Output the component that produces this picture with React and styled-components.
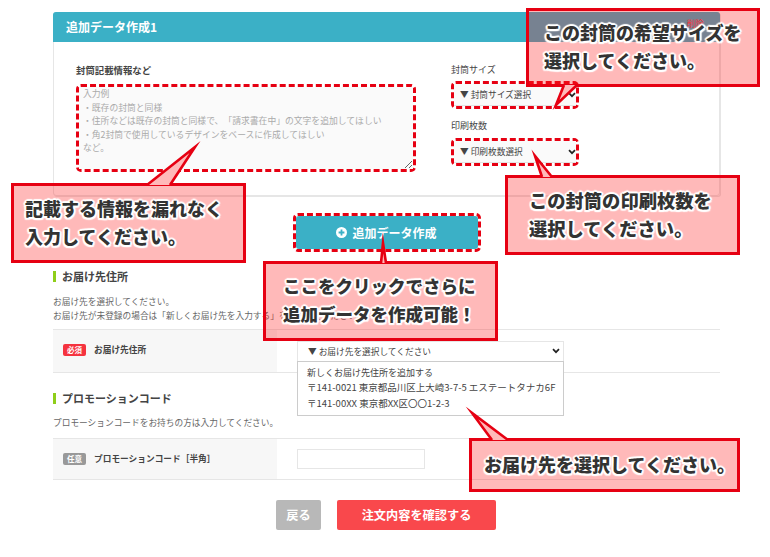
import React from "react";
import styled, { createGlobalStyle } from "styled-components";
//
const chevron =
  "url(\"data:image/svg+xml,%3Csvg xmlns='http://www.w3.org/2000/svg' width='8' height='6' viewBox='0 0 8 6'%3E%3Cpath d='M1 1.2l3 3 3-3' fill='none' stroke='%23222' stroke-width='1.7'/%3E%3C/svg%3E\")";
//
const GlobalStyle = createGlobalStyle`
  html, body {
    margin: 0;
    padding: 0;
    background: #fff;
  }
  body {
    font-family: "Noto Sans CJK JP", "Noto Sans", sans-serif;
    color: #555;
    overflow: hidden;
    text-spacing-trim: space-all;
  }
  textarea::placeholder {
    text-spacing-trim: space-all;
  }
`;
//
const Page = styled.div`
  position: relative;
  box-sizing: border-box;
  width: 770px;
  height: 557px;
  padding: 12px 50px 0 53px;
  background: #fff;
  overflow: hidden;
`;
const Panel = styled.section`
  box-sizing: border-box;
  height: 184px;
  border: 1px solid #e6e6e6;
  border-radius: 3px;
  box-shadow: 1px 1px 0 #e6e6e6;
`;
const PanelHeader = styled.h2`
  box-sizing: border-box;
  display: flex;
  justify-content: space-between;
  height: 30px;
  margin: -1px -1px 0;
  padding: 0 16px 0 13px;
  background: #3bb0c6;
  border-radius: 3px 3px 0 0;
  color: #fff;
  font-size: 12px;
  font-weight: 700;
  line-height: 30px;
`;
const RemoveLink = styled.span`
  color: #e8434f;
  font-size: 8.7px;
  font-weight: 400;
  line-height: 24px;
`;
const PanelBody = styled.div`
  display: grid;
  grid-template-columns: 340px 128px;
  column-gap: 35px;
  padding: 21px 0 0 22px;
`;
const FieldLabel = styled.div`
  margin-top: ${p => p.$top || 0}px;
  margin-bottom: ${p => p.$gap || 4}px;
  color: #444;
  font-size: ${p => (p.$bold ? 9.4 : 9)}px;
  font-weight: ${p => (p.$bold ? 700 : 400)};
  line-height: 14px;
`;
const Marked = styled.div`
  box-sizing: border-box;
  display: flex;
  height: ${p => p.$h}px;
  border: 3px dashed #e60012;
  border-radius: 5px;
`;
const Note = styled.textarea`
  box-sizing: border-box;
  flex: 1;
  padding: 0 4px;
  border: 0;
  background: #fafafa;
  font-family: inherit;
  font-size: 8.8px;
  line-height: 13.6px;
  &::placeholder {
    color: #aaa;
    opacity: 1;
  }
`;
const PanelSelect = styled.select`
  flex: 1;
  min-width: 0;
  padding-left: 6px;
  border: 0;
  border-bottom: 1px solid #e3e3e3;
  background: #fafafa ${chevron} no-repeat right 0 center;
  appearance: none;
  color: #444;
  font-family: inherit;
  font-size: 8.7px;
`;
const AddButtonWrap = styled(Marked)`
  width: 188px;
  margin: 17px auto 0;
`;
const AddButton = styled.button`
  flex: 1;
  display: flex;
  align-items: center;
  justify-content: center;
  gap: 5px;
  padding: 0;
  border: 0;
  border-radius: 3px;
  background: #3bb0c6;
  color: #fff;
  font-family: inherit;
  font-size: 12px;
  font-weight: 700;
`;
const Heading = styled.h3`
  margin: ${p => p.$top}px 0 0;
  padding-left: 6px;
  border-left: 3px solid #8fce1a;
  color: #444;
  font-size: 11px;
  font-weight: 700;
  line-height: 11px;
`;
const Desc = styled.p`
  margin: ${p => p.$top}px 0 0;
  color: #666;
  font-size: 8.7px;
  line-height: 13.5px;
`;
const Row = styled.div`
  display: grid;
  grid-template-columns: 224px 1fr;
  box-sizing: border-box;
  height: ${p => p.$h}px;
  margin-top: ${p => p.$top}px;
  border-top: 1px solid #e6e6e6;
  border-bottom: 1px solid #e6e6e6;
`;
const RowLabel = styled.div`
  display: flex;
  align-items: center;
  gap: 8px;
  padding: 0 0 ${p => p.$lift || 0}px 10px;
  background: #f7f7f7;
  color: #444;
  font-size: 8.7px;
  font-weight: 700;
`;
const Badge = styled.span`
  width: 23px;
  height: 12px;
  border-radius: 2px;
  background: ${p => (p.$required ? "#f5333f" : "#999")};
  color: #fff;
  font-size: 7.5px;
  font-weight: 700;
  line-height: 12px;
  text-align: center;
`;
const RowField = styled.div`
  display: flex;
  align-items: center;
  padding-left: 20px;
`;
const AddressPicker = styled.div`
  position: relative;
  width: 267px;
`;
const AddressSelect = styled.select`
  display: block;
  box-sizing: border-box;
  width: 100%;
  height: 21px;
  padding-left: 10px;
  border: 1px solid #e6e6e6;
  background: #fff ${chevron} no-repeat right 3px center;
  appearance: none;
  color: #444;
  font-family: inherit;
  font-size: 8.7px;
`;
const AddressMenu = styled.ul`
  position: absolute;
  top: 20px;
  left: 0;
  box-sizing: border-box;
  width: 100%;
  height: 55px;
  margin: 0;
  padding: 3px 0 0 9px;
  border: 1px solid #ccc;
  background: #fff;
  color: #444;
  line-height: 15.6px;
  list-style: none;
  white-space: nowrap;
`;
const AddressItem = styled.li`
  font-size: ${p => (p.$address ? 9.5 : 9)}px;
`;
const PromoInput = styled.input`
  box-sizing: border-box;
  width: 128px;
  height: 20px;
  border: 1px solid #e6e6e6;
  background: #fff;
`;
const Actions = styled.div`
  display: flex;
  justify-content: center;
  gap: 16px;
  margin-top: 20px;
  padding-right: 1px;
`;
const ActionButton = styled.button`
  width: ${p => p.$w}px;
  height: 30px;
  padding: 0;
  border: 0;
  border-radius: 2px;
  background: ${p => p.$bg};
  color: #fff;
  font-family: inherit;
  font-size: 12.2px;
  font-weight: 700;
`;
const Bubble = styled.div`
  position: absolute;
  left: ${p => p.$x}px;
  top: ${p => p.$y}px;
  box-sizing: border-box;
  display: flex;
  flex-direction: column;
  justify-content: center;
  width: ${p => p.$w}px;
  height: ${p => p.$h}px;
  padding: 0 0 3px ${p => p.$pad}px;
  border: 3px solid #e60012;
  background: rgba(255, 30, 30, 0.31);
`;
const BubbleLine = styled.div`
  color: #333;
  font-size: ${p => p.$size || 18}px;
  font-weight: 900;
  line-height: 28px;
  white-space: nowrap;
  text-shadow: 2px 0 1px #fff, -2px 0 1px #fff, 0 2px 1px #fff, 0 -2px 1px #fff,
    1.5px 1.5px 1px #fff, -1.5px 1.5px 1px #fff, 1.5px -1.5px 1px #fff,
    -1.5px -1.5px 1px #fff;
`;
const TailLayer = styled.svg`
  position: absolute;
  left: 0;
  top: 0;
  pointer-events: none;
`;
//
const callouts = [
  {
    x: 11, y: 183, w: 235, h: 80, pad: 11,
    lines: ["記載する情報を漏れなく", "入力してください。"],
    tail: [[147, 185], [195, 147], [170, 185]],
  },
  {
    x: 526, y: 8, w: 234, h: 79, pad: 15,
    lines: ["この封筒の希望サイズを", "選択してください。"],
    tail: [[564, 85], [556, 105], [577, 85]],
  },
  {
    x: 505, y: 175, w: 235, h: 80, pad: 21, size: 18.3,
    lines: ["この封筒の印刷枚数を", "選択してください。"],
    tail: [[542, 177], [535, 156], [552, 177]],
  },
  {
    x: 263, y: 261, w: 235, h: 80, pad: 17, size: 17.5,
    lines: ["ここをクリックでさらに", "追加データを作成可能！"],
    tail: [[381, 263], [383, 243], [386, 263]],
  },
  {
    x: 469, y: 438, w: 271, h: 54, pad: 12,
    lines: ["お届け先を選択してください。"],
    tail: [[492, 440], [472, 413], [508, 440]],
  },
];
//
const PlusIcon = () => (
  <svg width="11" height="11" viewBox="0 0 11 11">
    <circle cx="5.5" cy="5.5" r="5.5" fill="#fff" />
    <path d="M5.5 2.6v5.8M2.6 5.5h5.8" stroke="#3bb0c6" strokeWidth="1.8" />
  </svg>
);
//
const placeholder = `入力例
・既存の封筒と同様
・住所などは既存の封筒と同様で、「請求書在中」の文字を追加してほしい
・角2封筒で使用しているデザインをベースに作成してほしい
など。`;
//
export default function App() {
  return (
    <Page>
      <GlobalStyle />
      <Panel>
        <PanelHeader>
          追加データ作成1
          <RemoveLink>削除</RemoveLink>
        </PanelHeader>
        <PanelBody>
          <div>
            <FieldLabel $bold $gap={7}>封筒記載情報など</FieldLabel>
            <Marked $h={88}>
              <Note placeholder={placeholder} />
            </Marked>
          </div>
          <div>
            <FieldLabel>封筒サイズ</FieldLabel>
            <Marked $h={28}>
              <PanelSelect>
                <option>▼ 封筒サイズ選択</option>
              </PanelSelect>
            </Marked>
            <FieldLabel $top={10} $gap={5}>印刷枚数</FieldLabel>
            <Marked $h={28}>
              <PanelSelect>
                <option>▼ 印刷枚数選択</option>
              </PanelSelect>
            </Marked>
          </div>
        </PanelBody>
      </Panel>
      <AddButtonWrap $h={39}>
        <AddButton>
          <PlusIcon />
          追加データ作成
        </AddButton>
      </AddButtonWrap>

      <Heading $top={19}>お届け先住所</Heading>
      <Desc $top={13}>
        お届け先を選択してください。
        <br />
        お届け先が未登録の場合は「新しくお届け先を入力する」を選択してください。
      </Desc>
      <Row $h={44} $top={7}>
        <RowLabel $lift={3}>
          <Badge $required>必須</Badge>
          お届け先住所
        </RowLabel>
        <RowField>
          <AddressPicker>
            <AddressSelect>
              <option>▼ お届け先を選択してください</option>
            </AddressSelect>
            <AddressMenu>
              <AddressItem>新しくお届け先住所を追加する</AddressItem>
              <AddressItem $address>〒141-0021 東京都品川区上大崎3-7-5 エステートタナカ6F</AddressItem>
              <AddressItem $address>〒141-00XX 東京都XX区〇〇1-2-3</AddressItem>
            </AddressMenu>
          </AddressPicker>
        </RowField>
      </Row>

      <Heading $top={20}>プロモーションコード</Heading>
      <Desc $top={12}>プロモーションコードをお持ちの方は入力してください。</Desc>
      <Row $h={42} $top={8}>
        <RowLabel>
          <Badge>任意</Badge>
          プロモーションコード［半角］
        </RowLabel>
        <RowField>
          <PromoInput />
        </RowField>
      </Row>

      <Actions>
        <ActionButton $w={45} $bg="#b8b8b8">戻る</ActionButton>
        <ActionButton $w={159} $bg="#f9484c">注文内容を確認する</ActionButton>
      </Actions>

      {callouts.map(c => (
        <React.Fragment key={c.lines[0]}>
          <Bubble $x={c.x} $y={c.y} $w={c.w} $h={c.h} $pad={c.pad}>
            {c.lines.map(line => (
              <BubbleLine key={line} $size={c.size}>{line}</BubbleLine>
            ))}
          </Bubble>
          <TailLayer width="770" height="557">
            <polygon points={c.tail.join(" ")} fill="#ffb9b9" />
            <polyline
              points={c.tail.join(" ")}
              fill="none"
              stroke="#e60012"
              strokeWidth="2.6"
              strokeMiterlimit="12"
            />
          </TailLayer>
        </React.Fragment>
      ))}
    </Page>
  );
}
